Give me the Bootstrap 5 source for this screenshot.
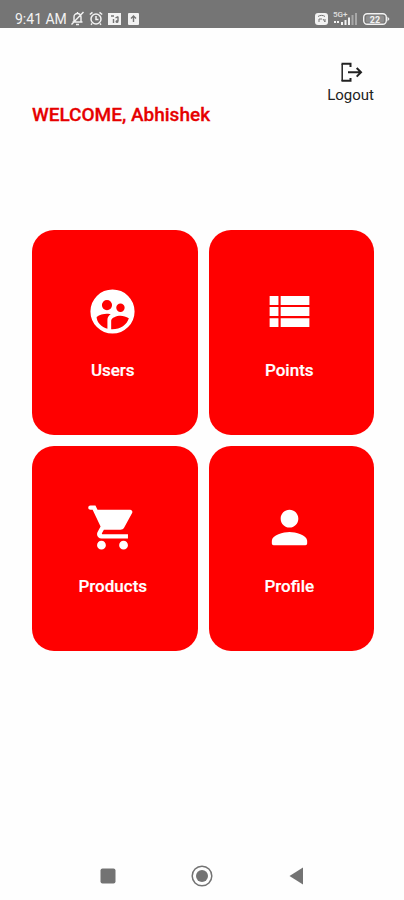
<!DOCTYPE html>
<html lang="en">
<head>
<meta charset="utf-8">
<meta name="viewport" content="width=device-width, initial-scale=1">
<title>Dashboard</title>
<link href="https://cdn.jsdelivr.net/npm/bootstrap@5.3.0/dist/css/bootstrap.min.css" rel="stylesheet">
<style>
  body { font-family: Roboto, sans-serif; background: #fefefe; }
  svg { display: block; flex: none; }
  .status-bar { background: #757575; color: #f2f2f2; height: 28px; padding: 10px 14px 0 15px; font-size: 14px; line-height: 18px; }
  .status-icons { gap: 4px; padding-left: 3px; }
  .page-main { padding: 31px 30px 0 32px; }
  .logout-btn { color: #222; font-size: 15px; line-height: 20px; border: 0; }
  .welcome { color: #e60000; font-size: 19px; line-height: 20px; font-weight: 500; -webkit-text-stroke: .3px currentColor; }
  .tiles { margin-top: 94px; --bs-gutter-x: 11px; --bs-gutter-y: 11px; }
  .tile { background: #f00; color: #fff; border: 0; border-radius: 22px; height: 205px; padding: 55px 4px 0 0; font-size: 17px; line-height: 20px; font-weight: 500; -webkit-text-stroke: .2px currentColor; }
  .tile:hover { background: #e00000; color: #fff; }
  .tile-label { margin-top: 22px; }
  .system-nav { padding: 0 96px 12px; color: #737373; }
  .system-nav button { color: inherit; line-height: 0; }
</style>
<script src="https://cdn.jsdelivr.net/npm/bootstrap@5.3.0/dist/js/bootstrap.bundle.min.js" defer></script>
</head>
<body class="min-vh-100 d-flex flex-column">
<header class="status-bar d-flex justify-content-between">
  <div class="d-flex">
    <span>9:41 AM</span>
    <div class="status-icons d-flex">
      <svg width="15" height="17" viewBox="0 0 15 17" fill="none" stroke="currentColor" stroke-width="1.4"><path d="M2.5 12h10M4 12V7a3.5 3.5 0 0 1 7 0v5M6 14.5h3M7.5 3.500V2M13.500 2 1.500 14.500"/></svg>
      <svg width="14" height="17" viewBox="0 0 14 17" fill="none" stroke="currentColor" stroke-width="1.5"><circle cx="7" cy="9" r="5"/><path d="M7 6v3.500h2.500M.8 4.500 3.500 2.300M13.200 4.500 10.500 2.300M3 13.500l-1 1.200M11 13.500l1 1.200"/></svg>
      <svg width="15" height="17" viewBox="-1 0 15 17"><path fill="currentColor" d="M0 3h13v12H0z"/><path d="M3 6h3M10 6.500v4.500M10 6.500 7.500 8M5.500 13V9" stroke="#757575" stroke-width="1.400" fill="none"/><circle cx="9" cy="11.500" r="1.500" fill="#757575"/></svg>
      <svg width="15" height="17" viewBox="0 0 15 17"><rect x="2" y="3" width="11" height="12" rx="1" fill="currentColor"/><path d="M7.500 12V6M5 8.500l2.500-2.500L10 8.500" stroke="#757575" stroke-width="1.400" fill="none"/></svg>
    </div>
  </div>
  <div class="d-flex gap-1">
    <svg width="14" height="17" viewBox="0 0 14 17"><rect y="3" width="13" height="12" rx="3" fill="currentColor"/><path d="M3 6.500c2-1.500 5-1.500 7 0M4 9h3M4 9v3M8 9l2 3M10 9v3" stroke="#757575" fill="none"/></svg>
    <svg width="25" height="17" viewBox="0 0 25 17"><text x="0" y="7" font-size="8" font-weight="500" fill="#e0e0e0">5G+</text><path fill="currentColor" d="M1 11h2v2H1zM4 11h2v2H4zM8 12h2v3H8zM11.500 10h2v5h-2zM15 7.500h2V15h-2z"/><path fill="#a8a8a8" d="M18.500 5h2v10h-2zM22 3h2v12h-2z"/></svg>
    <svg width="28" height="17" viewBox="0 0 28 17"><rect x="1.700" y="3.700" width="22.600" height="10.600" rx="3.500" fill="none" stroke="currentColor" stroke-width="1.400"/><path fill="currentColor" d="M25.500 6.500 27.500 9l-2 2.500z"/><rect x="4" y="5.500" width="18" height="7" rx="1.500" fill="#8d8d8d"/><text x="13" y="12.500" text-anchor="middle" font-size="9" font-weight="700" fill="#f2f2f2">22</text></svg>
  </div>
</header>

<main class="page-main">
  <div class="d-flex justify-content-end">
    <button type="button" class="logout-btn btn p-0 d-flex flex-column align-items-center">
      <svg width="24" height="26" viewBox="0 0 24 26" fill="none" stroke="currentColor"><path stroke-width="1.500" d="M3.200 5v17"/><path stroke-width="2" d="M2.500 4.700h9V8M2.500 21.800h9V19"/><path stroke-width="2" d="M9 13.300h13M17.700 9l4.300 4.300-4.300 4.300"/></svg>
      <span>Logout</span>
    </button>
  </div>
  <h1 class="welcome mb-0">WELCOME, Abhishek</h1>

  <div class="tiles row row-cols-2">
    <div class="col">
      <button type="button" class="tile btn w-100 d-flex flex-column align-items-center">
        <svg width="53" height="53" viewBox="0 0 24 24" fill="currentColor"><path fill-rule="evenodd" d="M12 2a10 10 0 1 0 0 20 10 10 0 0 0 0-20zM9.500 6.800a2.300 2.300 0 1 1 0 4.600 2.300 2.300 0 0 1 0-4.600zM15.600 8.400a1.900 1.900 0 1 1 0 3.800 1.900 1.900 0 0 1 0-3.800zM4.800 14.500C6.200 13.300 8.200 12.900 10 13c.5 0 .9.100 1.200.200-1.200.8-1.500 1.600-1.500 2.600v4C7 19 4.900 17 4.800 14.500zM11.400 20v-3.800c0-1.400 2.500-2.300 4.200-2.300 1.300 0 2.600.4 3.800 1.100-.9 3-4 5.200-8 5z"/></svg>
        <span class="tile-label">Users</span>
      </button>
    </div>
    <div class="col">
      <button type="button" class="tile btn w-100 d-flex flex-column align-items-center">
        <svg width="53" height="53" viewBox="0 0 24 24" fill="currentColor"><path d="M3 5h4v4H3zM8 5h13v4H8zM3 10h4v4H3zM8 10h13v4H8zM3 15h4v4H3zM8 15h13v4H8z"/></svg>
        <span class="tile-label">Points</span>
      </button>
    </div>
    <div class="col">
      <button type="button" class="tile btn w-100 d-flex flex-column align-items-center">
        <svg width="53" height="53" viewBox="0 0 24 24" fill="currentColor"><path d="M7 18c-1.100 0-1.990.9-1.990 2S5.900 22 7 22s2-.9 2-2-.9-2-2-2zM1 3q0 1 1 1h1l3.600 7.590-1.350 2.450c-.16.280-.25.610-.25.960 0 1.100.9 2 2 2h12v-2H7.420c-.14 0-.25-.11-.25-.25l.03-.12.9-1.630h7.450c.75 0 1.410-.41 1.750-1.030l3.580-6.490c.08-.14.120-.31.120-.48 0-.55-.45-1-1-1H5.210l-.94-2H2q-1 0-1 1zm16 15c-1.100 0-1.990.9-1.990 2s.89 2 1.990 2 2-.9 2-2-.9-2-2-2z"/></svg>
        <span class="tile-label">Products</span>
      </button>
    </div>
    <div class="col">
      <button type="button" class="tile btn w-100 d-flex flex-column align-items-center">
        <svg width="53" height="53" viewBox="0 0 24 24" fill="currentColor"><path d="M12 12c2.210 0 4-1.790 4-4s-1.790-4-4-4-4 1.790-4 4 1.790 4 4 4zm0 2c-2.670 0-8 1.340-8 4v1.200q0 .8.800.8h14.400q.8 0 .8-.8V18c0-2.660-5.330-4-8-4z"/></svg>
        <span class="tile-label">Profile</span>
      </button>
    </div>
  </div>
</main>

<nav class="system-nav mt-auto d-flex justify-content-between align-items-center" aria-label="System navigation">
  <button type="button" class="btn border-0 p-0" aria-label="Recent apps"><svg width="24" height="24" viewBox="0 0 24 24"><rect x="4.500" y="4.500" width="15" height="15" rx="2" fill="currentColor"/></svg></button>
  <button type="button" class="btn border-0 p-0" aria-label="Home"><svg width="24" height="24" viewBox="0 0 24 24"><circle cx="12" cy="12" r="9.800" fill="none" stroke="currentColor" stroke-width="1.500"/><circle cx="12" cy="12" r="6" fill="currentColor"/></svg></button>
  <button type="button" class="btn border-0 p-0" aria-label="Back"><svg width="24" height="24" viewBox="0 0 24 24"><path d="M5.500 12 19 3.500v17z" fill="currentColor"/></svg></button>
</nav>
</body>
</html>
